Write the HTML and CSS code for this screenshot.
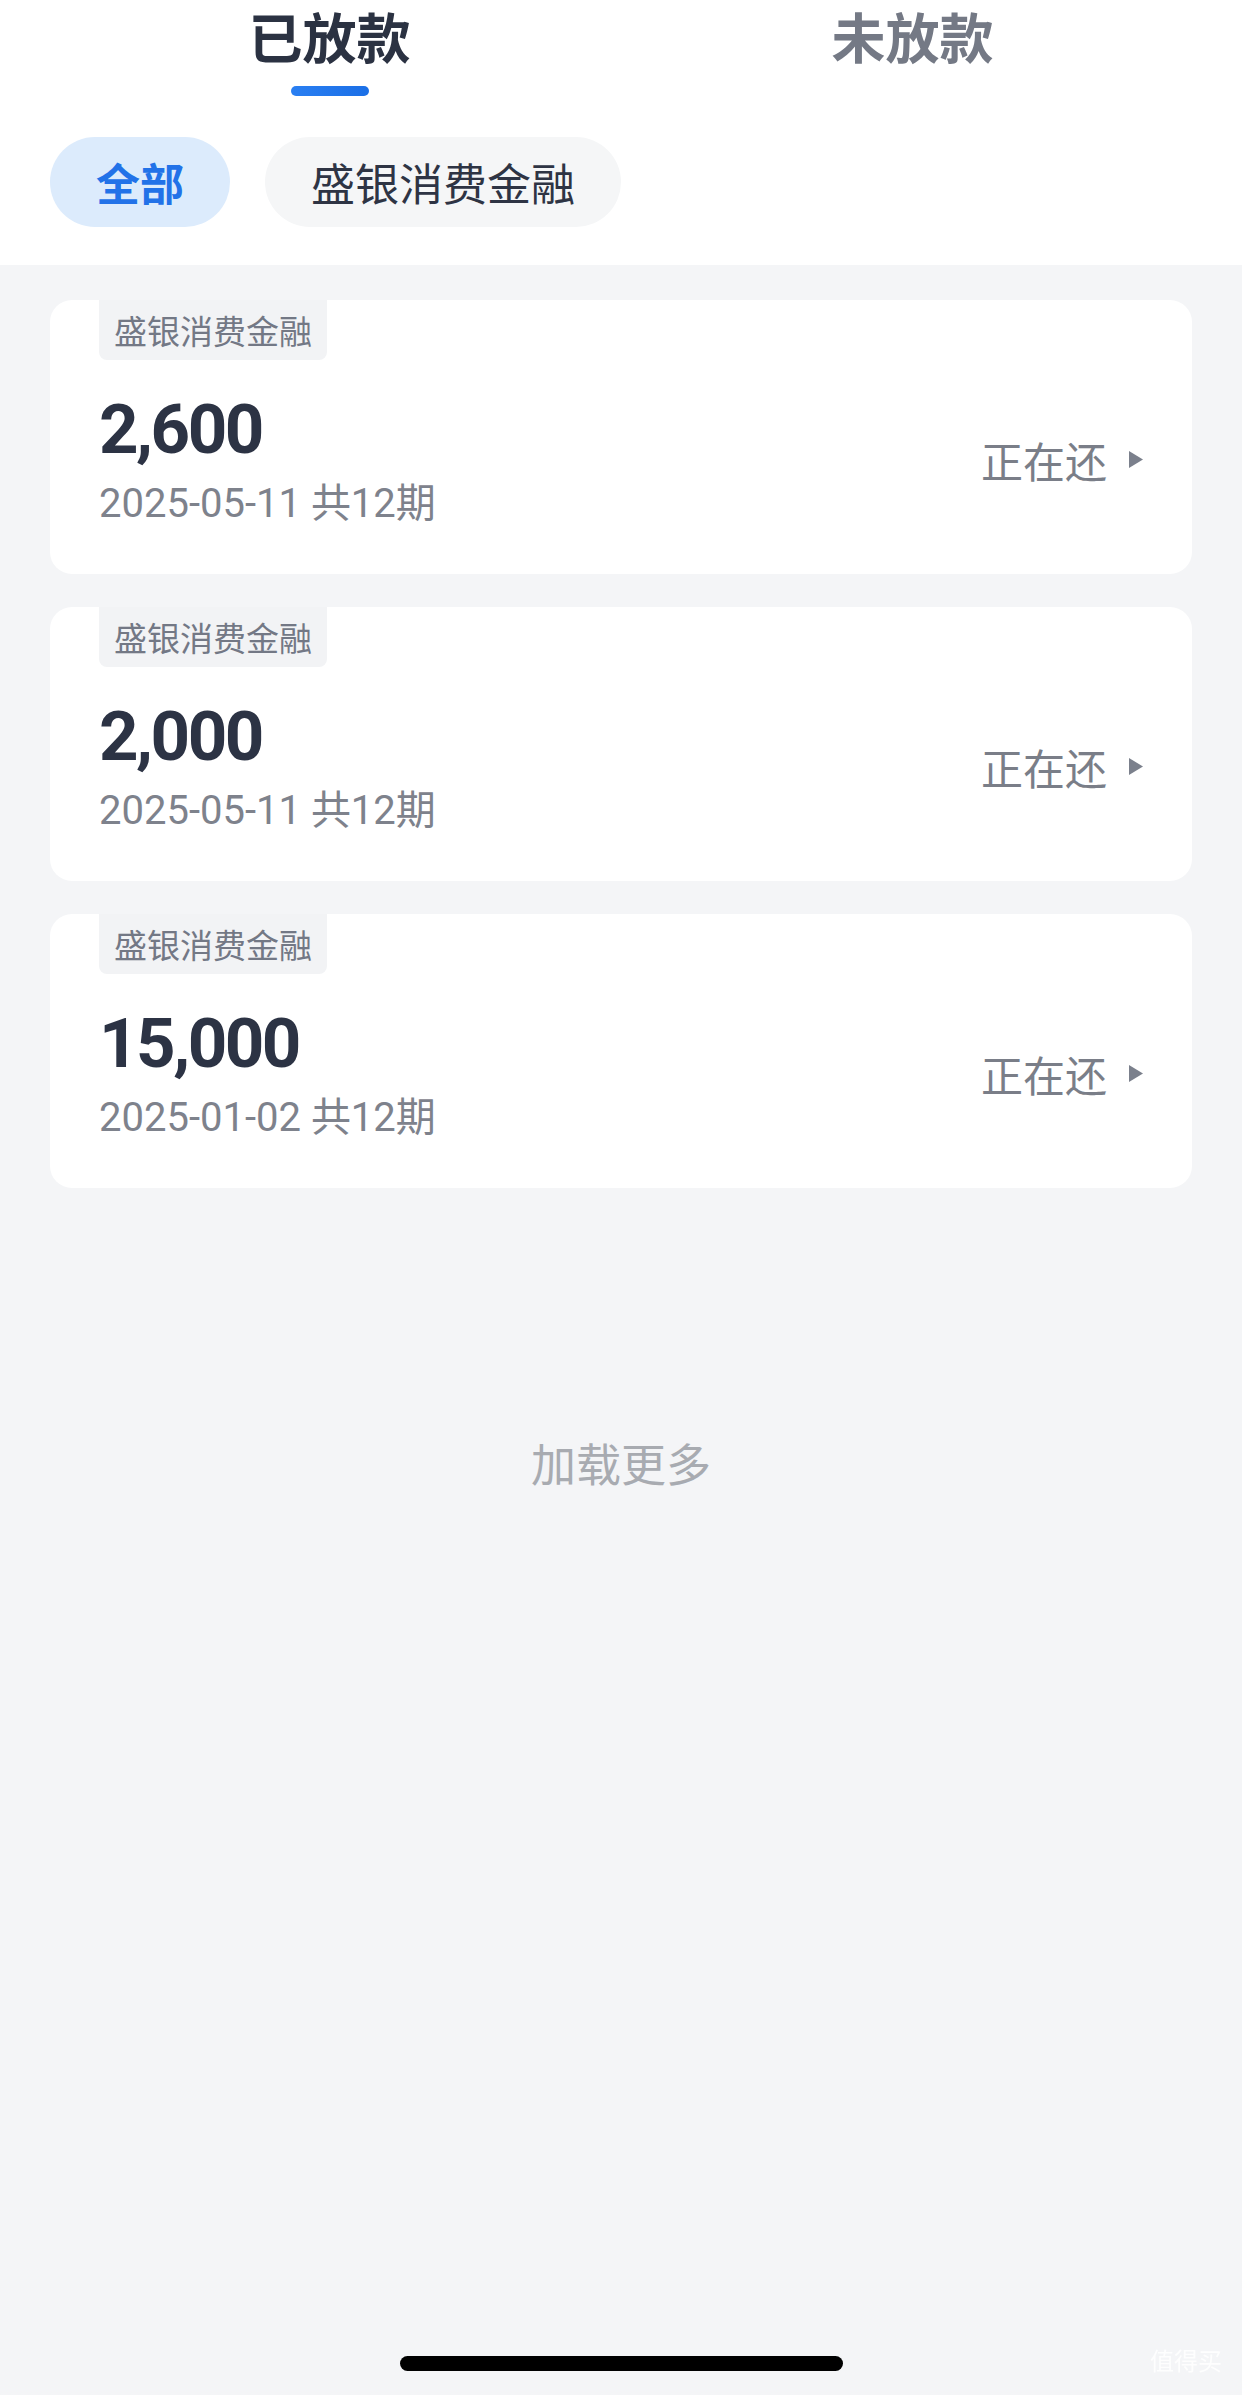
FILE: index.html
```html
<!DOCTYPE html>
<html lang="zh-CN">
<head>
  <meta charset="UTF-8">
  <meta name="viewport" content="width=device-width, initial-scale=1.0">
  <title>借款记录</title>
  <link rel="stylesheet" href="styles.css">
</head>
<body>
  <!-- Header: tabs + filter chips -->
  <div class="header">
    <div class="tabs">
      <div class="tab active">
        <span class="tab-label">已放款</span>
        <span class="tab-line"></span>
      </div>
      <div class="tab">
        <span class="tab-label">未放款</span>
      </div>
    </div>
    <div class="chips">
      <span class="chip selected">全部</span>
      <span class="chip">盛银消费金融</span>
    </div>
  </div>

  <!-- Loan list -->
  <div class="loan-list">
    <div class="loan-card">
      <span class="loan-tag">盛银消费金融</span>
      <div class="loan-body">
        <div class="loan-info">
          <div class="loan-amount">2,600</div>
          <div class="loan-date">2025-05-11 共12期</div>
        </div>
        <div class="loan-status">
          正在还
          <svg class="arrow" width="14" height="17" viewBox="0 0 14 17"><polygon points="0,0 14,8.5 0,17" fill="#7b808c"/></svg>
        </div>
      </div>
    </div>
    <div class="loan-card">
      <span class="loan-tag">盛银消费金融</span>
      <div class="loan-body">
        <div class="loan-info">
          <div class="loan-amount">2,000</div>
          <div class="loan-date">2025-05-11 共12期</div>
        </div>
        <div class="loan-status">
          正在还
          <svg class="arrow" width="14" height="17" viewBox="0 0 14 17"><polygon points="0,0 14,8.5 0,17" fill="#7b808c"/></svg>
        </div>
      </div>
    </div>
    <div class="loan-card">
      <span class="loan-tag">盛银消费金融</span>
      <div class="loan-body">
        <div class="loan-info">
          <div class="loan-amount">15,000</div>
          <div class="loan-date">2025-01-02 共12期</div>
        </div>
        <div class="loan-status">
          正在还
          <svg class="arrow" width="14" height="17" viewBox="0 0 14 17"><polygon points="0,0 14,8.5 0,17" fill="#7b808c"/></svg>
        </div>
      </div>
    </div>
  </div>

  <div class="load-more">加载更多</div>

  <div class="watermark">值得买</div>
  <div class="home-bar"></div>
</body>
</html>
```

FILE: styles.css
```css
html, body {
  margin: 0;
  padding: 0;
  min-height: 100vh;
  background-color: #f4f5f7;
  font-family: "Noto Sans CJK SC", sans-serif;
}
.header {
  background: #fff;
  padding-bottom: 38px;
}
.tabs {
  display: flex;
  padding: 0 38px;
}
.tab {
  flex: 1;
  display: flex;
  flex-direction: column;
  align-items: center;
  height: 97px;
}
.tab-label {
  font-size: 54px;
  line-height: 72px;
  font-weight: 600;
  color: #747985;
}
.tab.active .tab-label {
  font-weight: 700;
  color: #2b3242;
}
.tab-line {
  width: 78px;
  height: 10px;
  margin-top: 14px;
  border-radius: 5px;
  background: linear-gradient(90deg, #2a7ff2, #1b6fe6);
}
.chips {
  display: flex;
  gap: 35px;
  padding: 40px 50px 0;
}
.chip {
  height: 90px;
  line-height: 90px;
  padding: 0 46px;
  border-radius: 45px;
  font-size: 44px;
  color: #2e3444;
  background: #f5f6f7;
}
.chip.selected {
  font-weight: 700;
  color: #2272e8;
  background: #dcebfc;
}
.loan-list {
  display: flex;
  flex-direction: column;
  gap: 33px;
  padding: 35px 50px 0;
}
.loan-card {
  height: 274px;
  box-sizing: border-box;
  padding: 0 49px;
  background: #fff;
  border-radius: 22px;
}
.loan-tag {
  display: inline-block;
  height: 60px;
  line-height: 60px;
  padding: 0 15px;
  font-size: 33px;
  color: #737885;
  background: #f2f3f5;
  border-radius: 0 0 8px 8px;
}
.loan-body {
  display: flex;
  align-items: center;
  justify-content: space-between;
  padding-top: 30px;
}
.loan-amount {
  font-family: Roboto, "Noto Sans CJK SC", sans-serif;
  font-size: 69px;
  line-height: 80px;
  font-weight: 700;
  letter-spacing: -2.5px;
  color: #2c3344;
}
.loan-date {
  margin-top: 9px;
  font-family: Roboto, "Noto Sans CJK SC", sans-serif;
  font-size: 40px;
  line-height: 50px;
  color: #7e828c;
}
.loan-status {
  display: flex;
  align-items: center;
  gap: 22px;
  font-size: 42px;
  line-height: 42px;
  color: #7a7e88;
}
.load-more {
  margin-top: 252px;
  text-align: center;
  font-size: 45px;
  line-height: 46px;
  color: #a8abb1;
}
/* system overlays */
.home-bar {
  position: fixed;
  left: 400px;
  bottom: 24px;
  width: 443px;
  height: 15px;
  border-radius: 8px;
  background: #000;
}
.watermark {
  position: fixed;
  right: 20px;
  bottom: 18px;
  font-size: 24px;
  color: rgba(255, 255, 255, 0.85);
}
```
